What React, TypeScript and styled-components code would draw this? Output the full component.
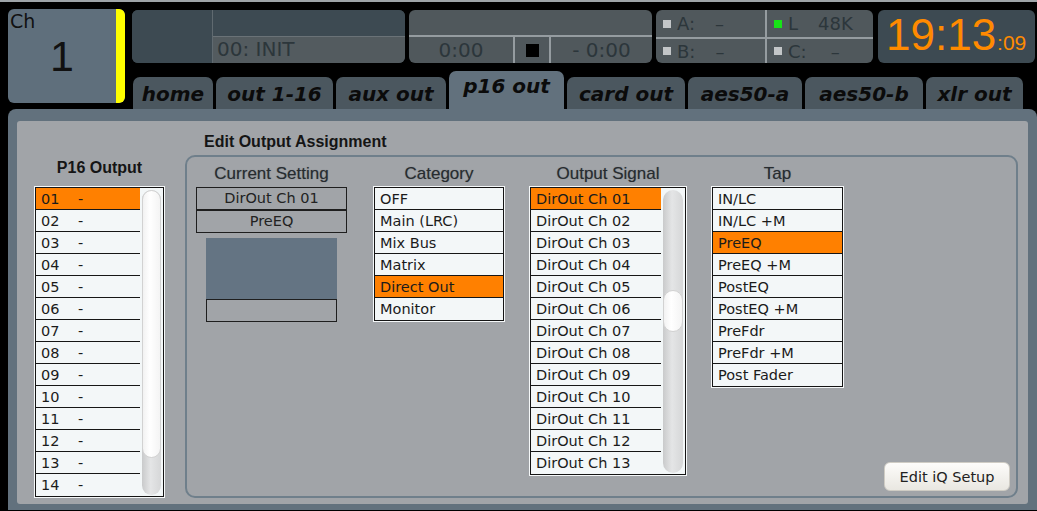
import styled, { createGlobalStyle } from 'styled-components';

const GlobalStyle = createGlobalStyle`
  html, body {
    margin: 0;
    padding: 0;
    background: #000;
  }
  body {
    font-family: "DejaVu Sans", Verdana, sans-serif;
  }
  * {
    box-sizing: border-box;
  }
`;

const Screen = styled.div`
  width: 1037px;
  height: 511px;
  overflow: hidden;
  background: #000;
  border-top: 2px solid #9ea4a8;
`;

/* ---------- header ---------- */

const Header = styled.div`
  display: grid;
  grid-template-columns: 117px 1fr;
  grid-template-rows: 54px 38px;
  column-gap: 7px;
  row-gap: 8px;
  padding: 7px 0 0 8px;
`;

const ChannelBox = styled.div`
  grid-row: 1 / span 2;
  height: 94px;
  display: flex;
  background: #5f6f7c;
  border-radius: 6px;
  overflow: hidden;
`;

const ChannelFace = styled.div`
  flex: 1;
  display: flex;
  flex-direction: column;
  padding: 1px 0 0 2px;
  color: #111;
`;

const ChLabel = styled.span`
  font-size: 19px;
  line-height: 22px;
`;

const ChNumber = styled.span`
  font-family: "Liberation Sans", Arial, sans-serif;
  font-size: 43px;
  line-height: 48px;
  text-align: center;
  padding-right: 2px;
`;

const ColorStrip = styled.div`
  width: 9px;
  background: #ffff00;
  border-radius: 0 5px 5px 0;
`;

const InfoStrip = styled.div`
  display: flex;
  gap: 4px;
  margin-top: 1px;
  height: 53px;
`;

const InfoBox = styled.div<{ $w: number; $dark?: boolean }>`
  width: ${({ $w }) => $w}px;
  background: ${({ $dark }) => ($dark ? '#3d4a52' : '#50585c')};
  border-radius: 6px;
  overflow: hidden;
  display: flex;
  color: #2c363b;
  font-size: 20px;
`;

const SceneThumb = styled.div`
  width: 81px;
  background: #3d4a52;
  border-right: 1px solid #606a70;
`;

const SceneInfo = styled.div`
  flex: 1;
  display: flex;
  flex-direction: column;
`;

const SceneTop = styled.div`
  height: 27px;
  background: #3d4a52;
  border-bottom: 1px solid #6a7277;
`;

const SceneName = styled.div`
  flex: 1;
  background: #535b5f;
  padding-left: 4px;
  line-height: 25px;
`;

const Transport = styled.div`
  flex: 1;
  display: flex;
  flex-direction: column;
`;

const TransportTop = styled.div`
  height: 27px;
  border-bottom: 2px solid #959ca0;
`;

const TransportRow = styled.div`
  flex: 1;
  display: flex;
`;

const TimeCell = styled.div<{ $w: number }>`
  width: ${({ $w }) => $w}px;
  display: flex;
  align-items: center;
  justify-content: center;
  line-height: 24px;
  & + & {
    border-left: 2px solid #959ca0;
  }
`;

const StopSquare = styled.div`
  width: 13px;
  height: 13px;
  background: #000;
`;

const StatusGrid = styled.div`
  flex: 1;
  display: grid;
  grid-template-columns: 109px 1fr;
  grid-template-rows: 27px 1fr;
`;

const StatusCell = styled.div<{ $right?: boolean; $bottom?: boolean }>`
  display: flex;
  align-items: center;
  padding-left: 7px;
  font-size: 18px;
  border-left: ${({ $right }) => ($right ? '2px solid #959ca0' : 'none')};
  border-top: ${({ $bottom }) => ($bottom ? '2px solid #959ca0' : 'none')};
`;

const Led = styled.span<{ $on?: boolean }>`
  width: 8px;
  height: 8px;
  margin-right: 6px;
  background: ${({ $on }) => ($on ? '#17e317' : '#c3c6c8')};
`;

const StatusValue = styled.span<{ $gap: number }>`
  margin-left: ${({ $gap }) => $gap}px;
`;

const Clock = styled.div`
  flex: 1;
  display: flex;
  align-items: baseline;
  padding: 0 0 0 8px;
  color: #ff8a00;
  font-family: "Liberation Sans", Arial, sans-serif;
`;

const ClockMain = styled.span`
  font-size: 44px;
  line-height: 50px;
`;

const ClockSec = styled.span`
  font-size: 21px;
  margin-left: 1px;
`;

const TabRow = styled.div`
  display: flex;
  align-items: flex-end;
  gap: 3px;
  padding-left: 1px;
`;

const Tab = styled.div<{ $w: number; $active?: boolean }>`
  width: ${({ $w }) => $w}px;
  height: ${({ $active }) => ($active ? 38 : 32)}px;
  background: ${({ $active }) => ($active ? '#62717d' : '#4b575f')};
  border-radius: 7px 7px 0 0;
  display: flex;
  align-items: ${({ $active }) => ($active ? 'flex-start' : 'center')};
  padding-top: ${({ $active }) => ($active ? 3 : 1)}px;
  justify-content: center;
  font-weight: bold;
  font-style: italic;
  font-size: 20px;
  color: #0b0b0b;
`;

/* ---------- main panel ---------- */

const Frame = styled.div`
  margin-left: 8px;
  height: 401px;
  background: #62717d;
  border-radius: 8px 8px 0 0;
  padding: 12px 9px 6px 9px;
`;

const Page = styled.div`
  height: 100%;
  background: #a1a4a8;
  border-radius: 3px;
  display: flex;
  padding-left: 18px;
`;

const LeftColumn = styled.div`
  width: 129px;
  display: flex;
  flex-direction: column;
  padding-top: 37px;
`;

const BoldTitle = styled.div<{ $center?: boolean }>`
  font-family: "Liberation Sans", Arial, sans-serif;
  font-weight: bold;
  font-size: 16px;
  line-height: 20px;
  color: #151515;
  text-align: ${({ $center }) => ($center ? 'center' : 'left')};
`;

const RightColumn = styled.div`
  margin-left: 21px;
  padding-top: 11px;
  display: flex;
  flex-direction: column;
`;

const AssignTitle = styled(BoldTitle)`
  padding-left: 19px;
  margin-bottom: 3px;
`;

const Group = styled.div`
  width: 833px;
  height: 343px;
  border: 2px solid #6f7f8b;
  border-radius: 10px;
  display: flex;
  padding: 7px 6px 5px 9px;
`;

const Column = styled.div<{ $w: number; $gap?: number }>`
  width: ${({ $w }) => $w}px;
  margin-left: ${({ $gap }) => $gap ?? 0}px;
  display: flex;
  flex-direction: column;
`;

const ColumnLabel = styled.div`
  font-family: "Liberation Sans", Arial, sans-serif;
  font-size: 17px;
  line-height: 20px;
  height: 23px;
  text-align: center;
  color: #272c30;
  text-shadow: 0 0 1px rgba(40, 44, 48, 0.45);
`;

const ListBox = styled.div`
  display: flex;
  background: #f3f7f8;
  border: 1px solid #141414;
  outline: 1px solid #f5f8f9;
  overflow: hidden;
`;

const Rows = styled.div`
  flex: 1;
  display: flex;
  flex-direction: column;
`;

const Row = styled.div<{ $selected?: boolean }>`
  height: 22px;
  line-height: 22px;
  padding-left: 5px;
  font-size: 14.5px;
  color: #1b1b1b;
  background: ${({ $selected }) => ($selected ? '#ff8000' : '#f3f7f8')};
  border-bottom: 1px solid #161616;
  white-space: nowrap;
  display: flex;

  &:last-child {
    border-bottom: none;
  }
`;

const RowNum = styled.span`
  width: 37px;
`;

const ScrollTrack = styled.div<{ $w: number }>`
  width: ${({ $w }) => $w}px;
  padding: 2px 2px 1px 2px;
  display: flex;
`;

const ScrollRail = styled.div`
  flex: 1;
  border-radius: 10px;
  background: linear-gradient(90deg, #c9cacb 0%, #e4e5e6 45%, #d6d7d8 100%);
  display: flex;
  flex-direction: column;
`;

const ScrollThumb = styled.div`
  border-radius: 10px;
  background: linear-gradient(90deg, #f2f2f2 0%, #ffffff 40%, #f4f4f4 100%);
  border: 1px solid #d2d2d2;
`;

const ValueBox = styled.div`
  height: 23px;
  border: 1px solid #1e1e1e;
  text-align: center;
  font-size: 14.5px;
  line-height: 21px;
  color: #222;
`;

const Preview = styled.div`
  margin: 5px 10px 0;
  height: 61px;
  background: #647483;
`;

const PreviewBox = styled.div`
  margin: 0 10px;
  height: 23px;
  border: 1px solid #1e1e1e;
`;

const Spacer = styled.div`
  flex: 1;
  display: flex;
  align-items: flex-end;
  justify-content: flex-end;
`;

const SetupButton = styled.button`
  width: 126px;
  height: 29px;
  border-radius: 6px;
  border: 1px solid #cfccc4;
  background: linear-gradient(#fdfcfa, #e9e7e1);
  font-family: "DejaVu Sans", Verdana, sans-serif;
  font-size: 14.5px;
  color: #222;
  padding: 0;
`;

const tabs = [
  { label: 'home', w: 80 },
  { label: 'out 1-16', w: 117 },
  { label: 'aux out', w: 110 },
  { label: 'p16 out', w: 115, active: true },
  { label: 'card out', w: 118 },
  { label: 'aes50-a', w: 114 },
  { label: 'aes50-b', w: 118 },
  { label: 'xlr out', w: 97 },
];

const categories = ['OFF', 'Main (LRC)', 'Mix Bus', 'Matrix', 'Direct Out', 'Monitor'];
const taps = [
  'IN/LC',
  'IN/LC +M',
  'PreEQ',
  'PreEQ +M',
  'PostEQ',
  'PostEQ +M',
  'PreFdr',
  'PreFdr +M',
  'Post Fader',
];
const p16 = Array.from({ length: 14 }, (_, i) => String(i + 1).padStart(2, '0'));
const signals = Array.from({ length: 13 }, (_, i) => `DirOut Ch ${String(i + 1).padStart(2, '0')}`);

const Scrollbar = ({ w, top, size }: { w: number; top: number; size: number }) => (
  <ScrollTrack $w={w}>
    <ScrollRail>
      <div style={{ height: top }} />
      <ScrollThumb style={{ height: size }} />
    </ScrollRail>
  </ScrollTrack>
);

export default function App() {
  return (
    <Screen>
      <GlobalStyle />
      <Header>
        <ChannelBox>
          <ChannelFace>
            <ChLabel>Ch</ChLabel>
            <ChNumber>1</ChNumber>
          </ChannelFace>
          <ColorStrip />
        </ChannelBox>

        <InfoStrip>
          <InfoBox $w={273} $dark>
            <SceneThumb />
            <SceneInfo>
              <SceneTop />
              <SceneName>00: INIT</SceneName>
            </SceneInfo>
          </InfoBox>
          <InfoBox $w={243}>
            <Transport>
              <TransportTop />
              <TransportRow>
                <TimeCell $w={104}>0:00</TimeCell>
                <TimeCell $w={36}>
                  <StopSquare />
                </TimeCell>
                <TimeCell $w={103}>- 0:00</TimeCell>
              </TransportRow>
            </Transport>
          </InfoBox>
          <InfoBox $w={217}>
            <StatusGrid>
              <StatusCell>
                <Led />
                A:
                <StatusValue $gap={20}>–</StatusValue>
              </StatusCell>
              <StatusCell $right>
                <Led $on />L<StatusValue $gap={20}>48K</StatusValue>
              </StatusCell>
              <StatusCell $bottom>
                <Led />
                B:
                <StatusValue $gap={20}>–</StatusValue>
              </StatusCell>
              <StatusCell $right $bottom>
                <Led />
                C:
                <StatusValue $gap={24}>–</StatusValue>
              </StatusCell>
            </StatusGrid>
          </InfoBox>
          <InfoBox $w={157} $dark style={{ marginLeft: 1 }}>
            <Clock>
              <ClockMain>19:13</ClockMain>
              <ClockSec>:09</ClockSec>
            </Clock>
          </InfoBox>
        </InfoStrip>

        <TabRow>
          {tabs.map((t) => (
            <Tab key={t.label} $w={t.w} $active={t.active}>
              {t.label}
            </Tab>
          ))}
        </TabRow>
      </Header>

      <Frame>
        <Page>
          <LeftColumn>
            <BoldTitle $center>P16 Output</BoldTitle>
            <ListBox style={{ marginTop: 9 }}>
              <Rows>
                {p16.map((n, i) => (
                  <Row key={n} $selected={i === 0}>
                    <RowNum>{n}</RowNum>-
                  </Row>
                ))}
              </Rows>
              <Scrollbar w={23} top={0} size={268} />
            </ListBox>
          </LeftColumn>

          <RightColumn>
            <AssignTitle>Edit Output Assignment</AssignTitle>
            <Group>
              <Column $w={151}>
                <ColumnLabel>Current Setting</ColumnLabel>
                <ValueBox>DirOut Ch 01</ValueBox>
                <ValueBox>PreEQ</ValueBox>
                <Preview />
                <PreviewBox />
              </Column>

              <Column $w={130} $gap={27}>
                <ColumnLabel>Category</ColumnLabel>
                <ListBox>
                  <Rows>
                    {categories.map((c) => (
                      <Row key={c} $selected={c === 'Direct Out'}>
                        {c}
                      </Row>
                    ))}
                  </Rows>
                </ListBox>
              </Column>

              <Column $w={156} $gap={26}>
                <ColumnLabel>Output Signal</ColumnLabel>
                <ListBox>
                  <Rows>
                    {signals.map((s, i) => (
                      <Row key={s} $selected={i === 0}>
                        {s}
                      </Row>
                    ))}
                  </Rows>
                  <Scrollbar w={24} top={100} size={42} />
                </ListBox>
              </Column>

              <Column $w={131} $gap={26}>
                <ColumnLabel>Tap</ColumnLabel>
                <ListBox>
                  <Rows>
                    {taps.map((t) => (
                      <Row key={t} $selected={t === 'PreEQ'}>
                        {t}
                      </Row>
                    ))}
                  </Rows>
                </ListBox>
              </Column>

              <Spacer>
                <SetupButton>Edit iQ Setup</SetupButton>
              </Spacer>
            </Group>
          </RightColumn>
        </Page>
      </Frame>
    </Screen>
  );
}
